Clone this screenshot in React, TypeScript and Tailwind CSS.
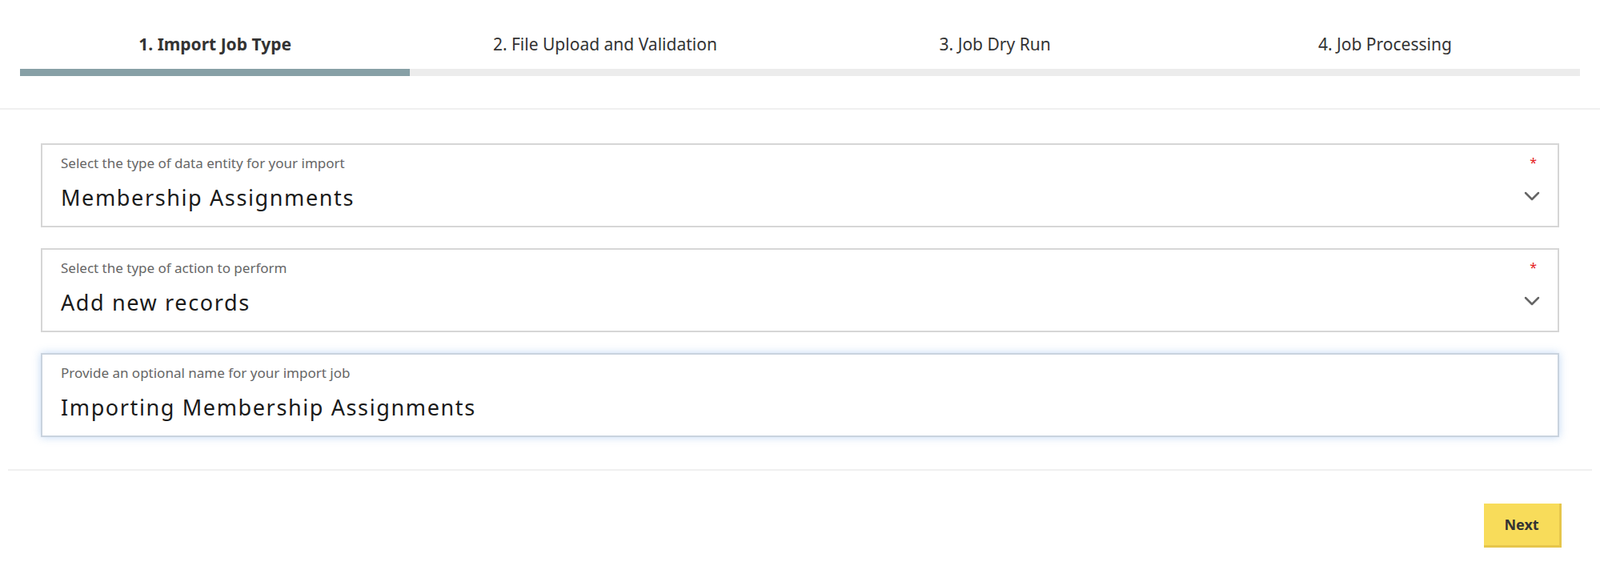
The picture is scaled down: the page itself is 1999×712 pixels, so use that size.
const steps = ["1. Import Job Type", "2. File Upload and Validation", "3. Job Dry Run", "4. Job Processing"];

function Chevron() {
  return (
    <svg width="20" height="12" viewBox="0 0 20 12" fill="none" stroke="#666" strokeWidth="2.5" strokeLinecap="round" strokeLinejoin="round">
      <path d="M2 2l8 8 8-8" />
    </svg>
  );
}

function Field({ label, value, required, select, focused }: { label: string; value: string; required?: boolean; select?: boolean; focused?: boolean }) {
  return (
    <div
      className={
        "relative h-[105px] border-2 bg-white px-[23px] pt-[10px] " +
        (focused ? "border-[#c9d3de] shadow-[0_0_10px_rgba(120,170,230,0.45)]" : "border-[#d6d6d6]")
      }
    >
      <div className="text-[17px] text-[#666]">{label}</div>
      <div className="mt-[10px] text-[27px] tracking-[0.06em] text-[#1a1a1a]">{value}</div>
      {required && <span className="absolute right-[26px] top-[10px] text-[16px] text-[#e52020]">*</span>}
      {select && (
        <span className="absolute right-[22px] top-[58px]">
          <Chevron />
        </span>
      )}
    </div>
  );
}

export default function App() {
  return (
    <div className="h-[712px] w-full bg-white font-['Lato','Liberation_Sans',sans-serif]">
      <div className="border-b-2 border-[#f0f0f0] px-[25px] pt-[40px] pb-[40px]">
        <div className="grid grid-cols-4">
          {steps.map((s, i) => (
            <div key={s} className="flex flex-col">
              <div className={"h-[32px] text-center text-[21px] " + (i === 0 ? "font-bold text-[#333]" : "text-[#333]")}>{s}</div>
              <div className={"mt-[14px] h-[9px] " + (i === 0 ? "bg-[#87a0a6]" : "bg-[#ececec]")} />
            </div>
          ))}
        </div>
      </div>
      <div className="mx-[10px] flex flex-col gap-[26px] border-b-2 border-[#f0f0f0] px-[41px] pt-[42px] pb-[40px]">
        <Field label="Select the type of data entity for your import" value="Membership Assignments" required select />
        <Field label="Select the type of action to perform" value="Add new records" required select />
        <Field label="Provide an optional name for your import job" value="Importing Membership Assignments" focused />
      </div>
      <div className="flex justify-end px-[48px] pt-[41px]">
        <button className="h-[55px] w-[97px] border-b-[3px] border-r-[3px] border-[#e6c64a] bg-[#f8dc5a] text-[18px] font-bold text-[#333]">Next</button>
      </div>
    </div>
  );
}
